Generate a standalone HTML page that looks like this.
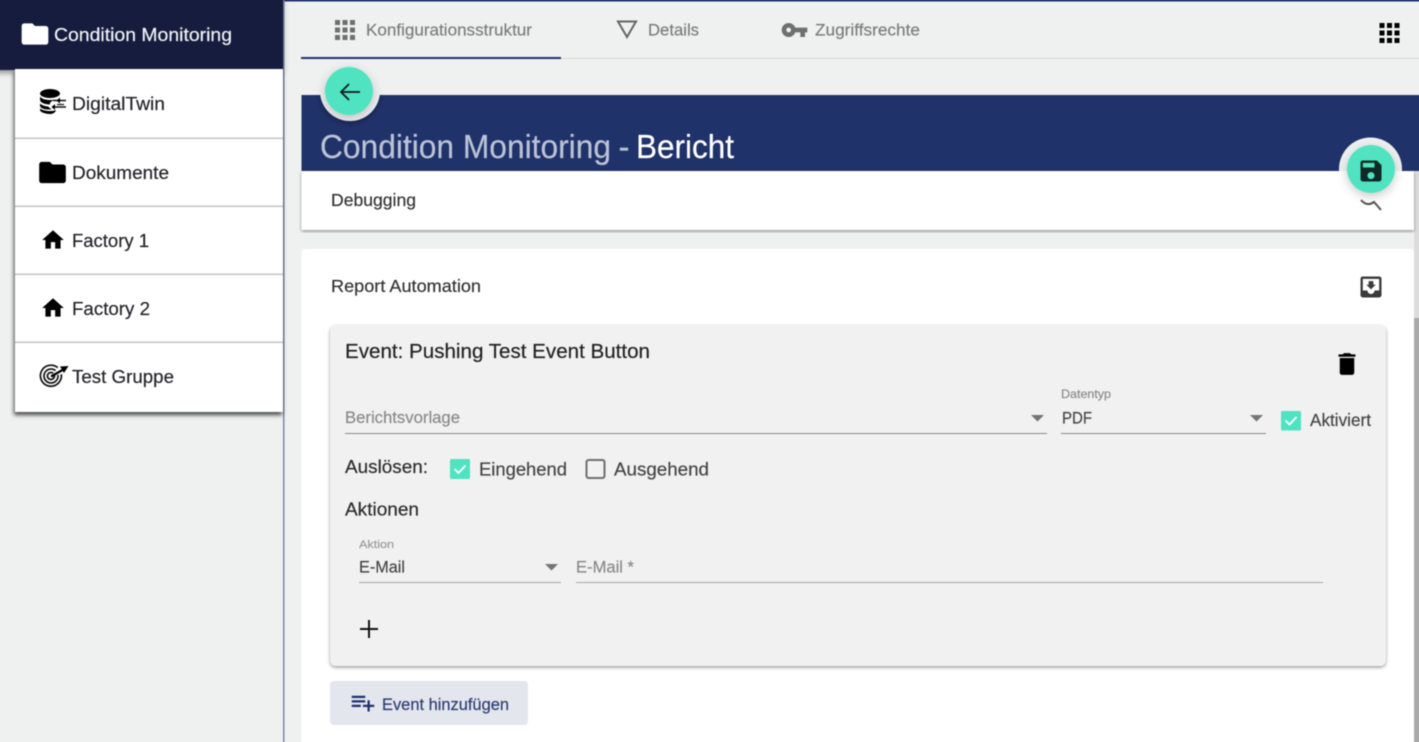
<!DOCTYPE html>
<html lang="de">
<head>
<meta charset="utf-8">
<title>Condition Monitoring - Bericht</title>
<style>
html,body{margin:0;padding:0;width:1419px;height:742px;overflow:hidden;background:#eff1f1}
#wrap{position:relative;width:1419px;height:742px;overflow:hidden;contain:paint}
svg{position:absolute;left:-10px;top:-10px;display:block;filter:blur(.4px)}
text{font-family:"Liberation Sans",sans-serif;fill:currentColor;stroke:currentColor;stroke-width:.18}
</style>
</head>
<body>
<div id="wrap">
<svg width="1439" height="762" viewBox="-10 -10 1439 762" xmlns="http://www.w3.org/2000/svg">
<defs>
<filter id="s1" x="-20%" y="-20%" width="140%" height="140%"><feDropShadow dx="0" dy="3" stdDeviation="3" flood-color="#000" flood-opacity=".4"/></filter>
<filter id="s2" x="-10%" y="-10%" width="120%" height="120%"><feDropShadow dx="-1" dy="3" stdDeviation="2" flood-color="#000" flood-opacity=".7"/></filter>
<filter id="s3" x="-5%" y="-5%" width="110%" height="110%"><feDropShadow dx="0" dy="1.5" stdDeviation="1.5" flood-color="#000" flood-opacity=".4"/></filter>
<filter id="s4" x="-60%" y="-60%" width="220%" height="220%"><feDropShadow dx="0" dy="3" stdDeviation="5" flood-color="#000" flood-opacity=".22"/></filter>
<filter id="s5" x="-40%" y="-40%" width="180%" height="180%"><feDropShadow dx="0" dy="2" stdDeviation="3" flood-color="#000" flood-opacity=".3"/></filter>
<clipPath id="cTop"><rect x="1300" y="100" width="130" height="71"/></clipPath>
<clipPath id="cBottom"><rect x="301" y="95" width="120" height="40"/></clipPath>
</defs>

<rect x="-10" y="-10" width="1439" height="762" fill="#eff1f1"/>
<rect x="-10" y="-10" width="1439" height="11.500" fill="#20326a"/>

<!-- right pane divider -->
<rect x="283" y="-10" width="1.500" height="762" fill="#7d88a8"/>

<!-- sidebar -->
<rect x="-10" y="-10" width="293" height="80" fill="#121f3d" filter="url(#s1)"/>
<rect x="15" y="69" width="268" height="343" fill="#fff" filter="url(#s2)"/>
<rect x="15" y="137.500" width="268" height="1.500" fill="#c4c4c4"/>
<rect x="15" y="205.500" width="268" height="1.500" fill="#c4c4c4"/>
<rect x="15" y="273.500" width="268" height="1.500" fill="#c4c4c4"/>
<rect x="15" y="341.500" width="268" height="1.500" fill="#c4c4c4"/>

<!-- tabs -->
<rect x="301" y="58" width="1128" height="1" fill="#d6d8d8"/>
<rect x="301" y="57" width="260" height="2" fill="#20326a"/>

<!-- header -->
<rect x="301.500" y="95" width="1128" height="76" fill="#20326a"/>

<!-- scrollbar -->
<rect x="1414" y="171" width="15" height="581" fill="#dcdcdc"/>
<rect x="1414" y="318" width="15" height="434" fill="#a9a9a9"/>

<!-- debugging card -->
<rect x="301.500" y="171" width="1112.500" height="59" fill="#fff" filter="url(#s3)"/>

<!-- report card -->
<rect x="301.500" y="249" width="1112.500" height="510" rx="4" fill="#fff"/>
<rect x="330" y="325" width="1056" height="341" rx="6" fill="#f1f1f1" filter="url(#s3)"/>

<!-- add event button -->
<rect x="330" y="681" width="198" height="44" rx="4" fill="#e4e6ed"/>

<!-- form lines -->
<rect x="345" y="433" width="702" height="1" fill="#8a8a8a"/>
<rect x="1061" y="433" width="205" height="1" fill="#8a8a8a"/>
<rect x="359" y="582" width="202" height="1" fill="#a8a8a8"/>
<rect x="576" y="582" width="747" height="1" fill="#a8a8a8"/>
<path d="M1031 415h13l-6.500 6.500zM1250 415h13l-6.500 6.500zM545 564h13l-6.500 6.500z" fill="#757575"/>

<!-- checkboxes -->
<rect x="1281" y="411" width="20" height="19.500" rx="1.500" fill="#4fe3c1"/>
<path d="M1285.500 420.500l4 4 7-7.500" fill="none" stroke="#fff" stroke-width="1.800"/>
<rect x="450" y="459" width="20" height="20" rx="1.500" fill="#4fe3c1"/>
<path d="M454.500 469l4 4 7-7.500" fill="none" stroke="#fff" stroke-width="1.800"/>
<rect x="586.500" y="460" width="18" height="18" rx="2" fill="none" stroke="#6e6e6e" stroke-width="2"/>

<!-- sidebar icons -->
<g transform="translate(19,18) scale(1.333)"><path fill="#fff" d="M10 4H4c-1.100 0-1.990.9-1.990 2L2 18c0 1.100.9 2 2 2h16c1.100 0 2-.9 2-2V8c0-1.100-.9-2-2-2h-8l-2-2z"/></g>
<g transform="translate(36.500,156.500) scale(1.333)"><path fill="#000" d="M10 4H4c-1.100 0-1.990.9-1.990 2L2 18c0 1.100.9 2 2 2h16c1.100 0 2-.9 2-2V8c0-1.100-.9-2-2-2h-8l-2-2z"/></g>
<g transform="translate(40,227) scale(1.083)"><path fill="#000" d="M10 20v-6h4v6h5v-8h3L12 3 2 12h3v8z"/></g>
<g transform="translate(40,295) scale(1.083)"><path fill="#000" d="M10 20v-6h4v6h5v-8h3L12 3 2 12h3v8z"/></g>

<!-- DigitalTwin icon -->
<g fill="#000">
<ellipse cx="50" cy="93.500" rx="10" ry="4.500"/>
<path d="M40 96.500c2 2.500 5.500 3.500 10 3.500 1.500 0 2.500 0 3.500-.3l-3.500 3v1.800c-5 0-10-2-10-4.500z"/>
<path d="M40 103.500c2 1.800 5 2.800 8 3l3.500 3H48c-4 0-8-1.800-8-3.500z"/>
<path d="M40 108.500c2.500 1.800 6 2.500 10 2.500 2.500 0 4.500-.3 6-.9-.5 2.300-3 3.900-6 3.900-5 0-10-2-10-4z"/>
</g>
<path d="M53 100.500h13M52 107h14" stroke="#111" stroke-width="1.400" fill="none"/>
<path d="M60 97.500l-3.500 3 3.500 3zM55 104l-3.500 3 3.500 3z" fill="#000"/>
<path d="M57 104.500h7" stroke="#111" stroke-width="1.200" fill="none"/>

<!-- Target icon -->
<g fill="none" stroke="#111" stroke-width="1.700">
<path d="M57.700 367.700a10.500 10.500 0 1 0 3.600 6.500"/>
<path d="M55.500 370.600a7 7 0 1 0 2.400 4.200"/>
<path d="M53.200 373.300a3.500 3.500 0 1 0 1.200 2.100"/>
</g>
<path d="M51 376.500l11.500-6.500" stroke="#000" stroke-width="2.200"/>
<path d="M60 366.500l8.500-.5-4.500 7z" fill="#000"/>

<!-- tab icons -->
<g transform="translate(330,15) scale(1.250)"><path fill="#6f6f6f" d="M4 8h4V4H4v4zm6 12h4v-4h-4v4zm-6 0h4v-4H4v4zm0-6h4v-4H4v4zm6 0h4v-4h-4v4zm6-10v4h4V4h-4zm-6 4h4V4h-4v4zm6 6h4v-4h-4v4zm0 6h4v-4h-4v4z"/></g>
<path d="M618 21.500h18l-9 15.500z" fill="none" stroke="#666" stroke-width="2"/>
<g transform="translate(780.500,16) scale(1.167)"><path fill="#6f6f6f" d="M12.650 10C11.830 7.670 9.610 6 7 6c-3.310 0-6 2.690-6 6s2.690 6 6 6c2.610 0 4.830-1.670 5.650-4H17v4h4v-4h2v-4H12.650zM7 14c-1.100 0-2-.9-2-2s.9-2 2-2 2 .9 2 2-.9 2-2 2z"/></g>
<g transform="translate(1374.500,18) scale(1.250)"><path fill="#000" d="M4 8h4V4H4v4zm6 12h4v-4h-4v4zm-6 0h4v-4H4v4zm0-6h4v-4H4v4zm6 0h4v-4h-4v4zm6-10v4h4V4h-4zm-6 4h4V4h-4v4zm6 6h4v-4h-4v4zm0 6h4v-4h-4v4z"/></g>

<!-- right icons -->
<path d="M1361 200Q1367 207 1374 202L1381 210" fill="none" stroke="#555" stroke-width="2"/>
<g transform="translate(1357,273) scale(1.167)"><path fill="#3a3a3a" d="M19 3H4.990c-1.110 0-1.980.9-1.980 2L3 19c0 1.100.88 2 1.990 2H19c1.100 0 2-.9 2-2V5c0-1.100-.9-2-2-2zm0 12h-4c0 1.660-1.350 3-3 3s-3-1.340-3-3H4.990V5H19v10zm-3-5h-2V7h-4v3H8l4 4 4-4z"/></g>
<g transform="translate(1332.500,349.500) scale(1.208)"><path fill="#000" d="M6 19c0 1.100.9 2 2 2h8c1.100 0 2-.9 2-2V7H6v12zM19 4h-3.500l-1-1h-5l-1 1H5v2h14V4z"/></g>
<path d="M369 620v18M360 629h18" stroke="#111" stroke-width="2" fill="none"/>
<g transform="translate(349.500,689) scale(1.125)"><path fill="#20326a" d="M14 10H2v2h12v-2zm0-4H2v2h12V6zm4 8v-4h-2v4h-4v2h4v4h2v-4h4v-2h-4zM2 16h8v-2H2v2z"/></g>

<!-- text -->
<g>
<text x="54" y="41" font-size="18.500" color="#f2f4f8" textLength="178" lengthAdjust="spacingAndGlyphs">Condition Monitoring</text>
<g font-size="18.500" color="#24242a">
<text x="72" y="110" textLength="93" lengthAdjust="spacingAndGlyphs">DigitalTwin</text>
<text x="72" y="179" textLength="97" lengthAdjust="spacingAndGlyphs">Dokumente</text>
<text x="72" y="247" textLength="77" lengthAdjust="spacingAndGlyphs">Factory 1</text>
<text x="72" y="315" textLength="78" lengthAdjust="spacingAndGlyphs">Factory 2</text>
<text x="72" y="383" textLength="102" lengthAdjust="spacingAndGlyphs">Test Gruppe</text>
</g>
<g font-size="17" color="#7c7c7c">
<text x="366" y="35.500" textLength="166" lengthAdjust="spacingAndGlyphs">Konfigurationsstruktur</text>
<text x="648" y="35.500" textLength="51" lengthAdjust="spacingAndGlyphs">Details</text>
<text x="815" y="35.500" textLength="105" lengthAdjust="spacingAndGlyphs">Zugriffsrechte</text>
</g>
<text x="320" y="158" font-size="33" color="#bcc3d6" textLength="291" lengthAdjust="spacingAndGlyphs">Condition Monitoring</text>
<text x="618.500" y="158" font-size="33" color="#bcc3d6">-</text>
<text x="636" y="158" font-size="33" color="#fff" textLength="98" lengthAdjust="spacingAndGlyphs">Bericht</text>
<text x="331" y="206" font-size="17.500" color="#333" textLength="85" lengthAdjust="spacingAndGlyphs">Debugging</text>
<text x="331" y="292" font-size="17.500" color="#333" textLength="150" lengthAdjust="spacingAndGlyphs">Report Automation</text>
<text x="345" y="358" font-size="20.500" color="#222" textLength="305" lengthAdjust="spacingAndGlyphs">Event: Pushing Test Event Button</text>
<text x="345" y="423" font-size="17" color="#8a8a8a" textLength="115" lengthAdjust="spacingAndGlyphs">Berichtsvorlage</text>
<text x="1061" y="398" font-size="12" color="#8a8a8a" textLength="50" lengthAdjust="spacingAndGlyphs">Datentyp</text>
<text x="1062" y="423.500" font-size="17" color="#444" textLength="30" lengthAdjust="spacingAndGlyphs">PDF</text>
<text x="1310" y="426" font-size="17.500" color="#444" textLength="61" lengthAdjust="spacingAndGlyphs">Aktiviert</text>
<text x="345" y="473" font-size="18.500" color="#2c2c2c" textLength="83" lengthAdjust="spacingAndGlyphs">Auslösen:</text>
<text x="479" y="475.500" font-size="18.500" color="#444" textLength="88" lengthAdjust="spacingAndGlyphs">Eingehend</text>
<text x="614" y="475.500" font-size="18.500" color="#444" textLength="95" lengthAdjust="spacingAndGlyphs">Ausgehend</text>
<text x="345" y="515.500" font-size="18.500" color="#2c2c2c" textLength="74" lengthAdjust="spacingAndGlyphs">Aktionen</text>
<text x="359" y="548" font-size="11" color="#9a9a9a" textLength="35" lengthAdjust="spacingAndGlyphs">Aktion</text>
<text x="359" y="572.500" font-size="17" color="#444" textLength="46" lengthAdjust="spacingAndGlyphs">E-Mail</text>
<text x="576" y="572.500" font-size="17" color="#8a8a8a" textLength="58" lengthAdjust="spacingAndGlyphs">E-Mail *</text>
<text x="382" y="710" font-size="17" color="#2b3d70" textLength="127" lengthAdjust="spacingAndGlyphs">Event hinzufügen</text>
</g>

<!-- FABs -->
<g clip-path="url(#cBottom)"><circle cx="350" cy="91" r="30" fill="#eff1f1" filter="url(#s5)"/></g>
<circle cx="349" cy="91" r="24" fill="#4fe3c1" filter="url(#s4)"/>
<path d="M360 92h-19M349 84l-8 8 8 8" fill="none" stroke="#0c1c1a" stroke-width="1.800"/>
<g clip-path="url(#cTop)"><circle cx="1370.500" cy="169" r="31.500" fill="#eff1f1"/></g>
<circle cx="1371" cy="169" r="24" fill="#4fe3c1" filter="url(#s4)"/>
<g transform="translate(1357,157) scale(1.167)"><path fill="#0d2a26" d="M17 3H5c-1.110 0-2 .9-2 2v14c0 1.100.89 2 2 2h14c1.100 0 2-.9 2-2V7l-4-4zm-5 16c-1.660 0-3-1.340-3-3s1.340-3 3-3 3 1.340 3 3-1.340 3-3 3zm3-10H5V5h10v4z"/></g>
</svg>
</div>
</body>
</html>
